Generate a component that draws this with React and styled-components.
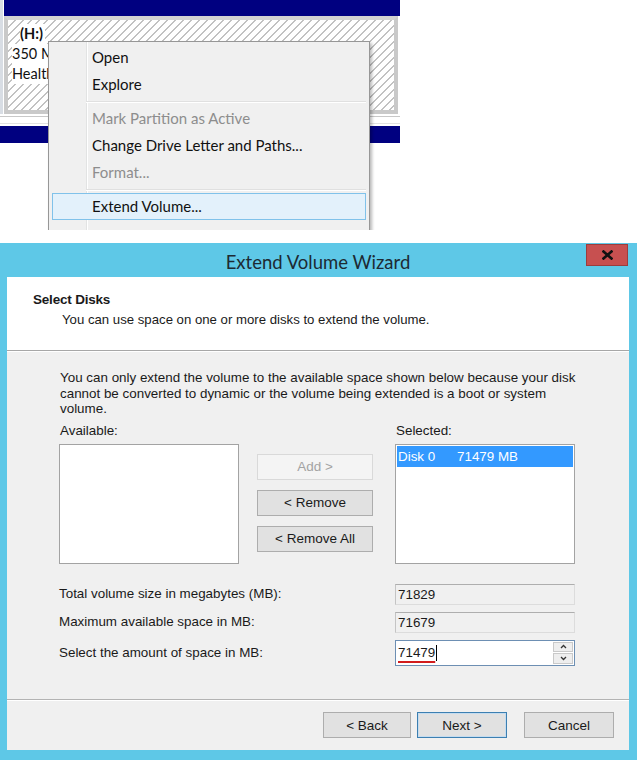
import React from 'react';
import styled, { createGlobalStyle } from 'styled-components';

const GlobalStyle = createGlobalStyle`
  html, body {
    margin: 0;
    padding: 0;
    background: #ffffff;
  }
  body {
    width: 637px;
    height: 760px;
    overflow: hidden;
    font-family: "Liberation Sans", Arial, sans-serif;
    color: #1a1a1a;
  }
`;

const Page = styled.div`
  width: 637px;
  display: flex;
  flex-direction: column;
`;

/* ---------- disk management strip + context menu ---------- */

const DiskArea = styled.div`
  position: relative;
  height: 230px;
  overflow: hidden;
`;

const DiskColumn = styled.div`
  width: 400px;
  display: flex;
  flex-direction: column;
  border-left: 3px solid #d8dde4;
  box-sizing: border-box;
`;

const NavyBar = styled.div`
  height: ${p => p.$h}px;
  margin-left: ${p => p.$inset || 0}px;
  background: #000080;
`;

const DiskFrame = styled.div`
  margin: 0 2px 0 1px;
  height: 86px;
  border: 4px solid #c9c9c9;
  border-top-color: #d2d2d2;
  display: flex;
  flex-direction: column;
  padding: 4px 0 0 4px;
  box-sizing: content-box;
  background: repeating-linear-gradient(
    135deg,
    #ffffff 0px,
    #ffffff 4.4px,
    #c2c2c2 4.4px,
    #c2c2c2 5.66px
  );
  font-family: Lato, "Noto Sans", sans-serif;
  font-size: 14.5px;
  line-height: 20px;
  color: #111;
`;

const DiskLabel = styled.span`
  align-self: flex-start;
  background: #ffffff;
  margin-left: ${p => p.$indent || 0}px;
  font-weight: ${p => (p.$bold ? 700 : 400)};
  padding-right: 2px;
`;

const DiskGap = styled.div`
  height: 12px;
  margin-left: -3px;
  background: linear-gradient(
    #ffffff 0 2px,
    #c8c8c8 2px 3px,
    #ffffff 3px 9px,
    #e2e2e2 9px 10px,
    #ffffff 10px
  );
`;

const ContextMenu = styled.div`
  position: absolute;
  left: 48px;
  top: 41px;
  width: 314px;
  padding: 2px 3px 30px;
  background: #f0f0f0
    linear-gradient(
      to right,
      transparent 37px,
      #e2e3e3 37px 38px,
      #ffffff 38px 39px,
      transparent 39px
    );
  border: 1px solid #979797;
  box-shadow: 2px 2px 3px rgba(0, 0, 0, 0.28);
  font-family: Lato, "Noto Sans", sans-serif;
  font-size: 15px;
`;

const MenuItem = styled.div`
  height: 25px;
  line-height: 25px;
  padding-left: 39px;
  border: 1px solid ${p => (p.$hot ? '#80c2ea' : 'transparent')};
  background: ${p => (p.$hot ? '#e3f1fb' : 'transparent')};
  color: ${p => (p.$disabled ? '#8d8d8d' : '#111111')};
`;

const MenuSeparator = styled.div`
  height: 7px;
  margin-left: 34px;
  background: linear-gradient(
    transparent 0 3px,
    #e0e0e0 3px 4px,
    #ffffff 4px 5px,
    transparent 5px
  );
`;

/* ---------- wizard window ---------- */

const Window = styled.div`
  margin-top: 13px;
  height: 517px;
  background: #5ec8e7;
  padding: 0 8px 10px 7px;
  display: flex;
  flex-direction: column;
  box-sizing: border-box;
`;

const TitleBar = styled.div`
  height: 34px;
  display: grid;
  grid-template-columns: 1fr auto 1fr;
  align-items: start;
`;

const Title = styled.div`
  grid-column: 2;
  padding-top: 4px;
  line-height: 30px;
  font-family: Lato, "Noto Sans", sans-serif;
  font-size: 18.5px;
  color: #1d2a33;
`;

const CloseButton = styled.div`
  grid-column: 3;
  justify-self: end;
  margin-top: 1px;
  margin-right: 1px;
  width: 40px;
  height: 20px;
  background: #c75050;
  border: 1px solid #9c3d3d;
  display: flex;
  align-items: center;
  justify-content: center;
`;

const Panel = styled.div`
  flex: 1;
  display: flex;
  flex-direction: column;
  background: #f0f0f0;
`;

const Header = styled.div`
  height: 74px;
  background: #ffffff;
  padding: 15px 0 0 26px;
  box-sizing: border-box;
  border-bottom: 1px solid #a7a7a7;
`;

const HeaderTitle = styled.div`
  font-weight: 700;
  font-size: 13.5px;
  line-height: 16px;
  letter-spacing: -0.2px;
`;

const HeaderText = styled.div`
  margin-top: 4px;
  padding-left: 29px;
  font-size: 13.2px;
  line-height: 16px;
`;

const Body = styled.div`
  flex: 1;
  padding: 18px 0 0 52px;
  border-top: 1px solid #ffffff;
  font-size: 13.4px;
`;

const Intro = styled.p`
  margin: 0 0 0 1px;
  width: 524px;
  line-height: 15.5px;
`;

const Pickers = styled.div`
  margin-top: 6px;
  display: grid;
  grid-template-columns: 198px 138px 180px;
  grid-template-rows: 15px 120px;
  row-gap: 6px;
`;

const PickerLabel = styled.div`
  grid-column: ${p => p.$col};
  grid-row: 1;
  line-height: 15px;
  padding-left: 1px;
`;

const ListBox = styled.div`
  grid-column: ${p => p.$col};
  grid-row: 2;
  width: 180px;
  background: #ffffff;
  border: 1px solid #a3a3a3;
  box-sizing: border-box;
  padding: 1px;
`;

const ListRow = styled.div`
  height: 21px;
  display: flex;
  align-items: center;
  padding-left: 1px;
  background: #3399ff;
  color: #ffffff;
`;

const ListCell = styled.span`
  width: ${p => p.$w}px;
`;

const ButtonStack = styled.div`
  grid-column: 2;
  grid-row: 2;
  padding-top: 10px;
  display: flex;
  flex-direction: column;
  gap: 10px;
`;

const Button = styled.div`
  width: ${p => p.$w}px;
  height: 26px;
  box-sizing: border-box;
  display: flex;
  align-items: center;
  justify-content: center;
  font-size: 13.5px;
  background: ${p => (p.$disabled ? '#f4f4f4' : '#e1e1e1')};
  border: 1px solid
    ${p => (p.$disabled ? '#d9d9d9' : p.$default ? '#3c7fb1' : '#adadad')};
  box-shadow: ${p => (p.$default ? 'inset 0 0 0 1px #c5dcef' : 'none')};
  color: ${p => (p.$disabled ? '#a3a3a3' : '#1a1a1a')};
`;

const Fields = styled.div`
  margin-top: 20px;
  display: grid;
  grid-template-columns: 336px 180px;
  row-gap: 7px;
  align-items: center;
`;

const FieldLabel = styled.div`
  line-height: 16px;
`;

const ReadOnlyField = styled.div`
  height: 21px;
  box-sizing: border-box;
  border: 1px solid;
  border-color: #aeaeae #dcdcdc #dcdcdc #c4c4c4;
  background: #f0f0f0;
  padding-left: 2px;
  line-height: 19px;
`;

const SpinField = styled.div`
  height: 26px;
  box-sizing: border-box;
  border: 1px solid #6d8fb3;
  background: #ffffff;
  display: flex;
  align-items: stretch;
`;

const SpinValue = styled.div`
  flex: 1;
  display: flex;
  align-items: center;
  padding-left: 2px;
`;

const Typed = styled.span`
  text-decoration: underline solid #d21c1c;
  text-decoration-thickness: 1.5px;
  text-underline-offset: 4px;
`;

const Caret = styled.span`
  display: inline-block;
  width: 1px;
  height: 16px;
  background: #000;
  margin-left: 1px;
  vertical-align: middle;
`;

const SpinButtons = styled.div`
  width: 20px;
  margin: 1px;
  display: flex;
  flex-direction: column;
  gap: 1px;
`;

const SpinButton = styled.div`
  flex: 1;
  background: #eeeeee;
  border: 1px solid #c9c9c9;
  display: flex;
  align-items: center;
  justify-content: center;
`;

const Footer = styled.div`
  height: 50px;
  border-top: 1px solid #b3b3b3;
  box-shadow: inset 0 1px 0 #ffffff;
  display: flex;
  align-items: center;
  justify-content: flex-end;
  padding: 0 15px 0 0;
`;

const FooterGap = styled.div`
  width: ${p => p.$w}px;
`;

const Chevron = ({ up }) => (
  <svg width="7" height="5" viewBox="0 0 7 5">
    <polyline
      points={up ? '1,4 3.5,1.5 6,4' : '1,1 3.5,3.5 6,1'}
      fill="none"
      stroke="#333"
      strokeWidth="1.3"
    />
  </svg>
);

const CloseGlyph = () => (
  <svg width="11" height="10" viewBox="0 0 11 10">
    <path d="M1.5 1.5 L9.5 8.5 M9.5 1.5 L1.5 8.5" stroke="#111" strokeWidth="2.6" strokeLinecap="square" />
  </svg>
);

const menuItems = [
  { label: 'Open' },
  { label: 'Explore' },
  { sep: true },
  { label: 'Mark Partition as Active', disabled: true },
  { label: 'Change Drive Letter and Paths...' },
  { label: 'Format...', disabled: true },
  { sep: true },
  { label: 'Extend Volume...', hot: true },
];

const fields = [
  { label: 'Total volume size in megabytes (MB):', value: '71829' },
  { label: 'Maximum available space in MB:', value: '71679' },
];

const App = () => (
  <Page>
    <GlobalStyle />
    <DiskArea>
      <DiskColumn>
        <NavyBar $h={16} $inset={1} />
        <DiskFrame>
          <DiskLabel $bold $indent={8}>(H:)</DiskLabel>
          <DiskLabel>350 MB</DiskLabel>
          <DiskLabel>Healthy</DiskLabel>
        </DiskFrame>
        <DiskGap />
        <NavyBar $h={17} $inset={-3} />
      </DiskColumn>

      <ContextMenu>
        {menuItems.map((item, i) =>
          item.sep ? (
            <MenuSeparator key={i} />
          ) : (
            <MenuItem key={i} $disabled={item.disabled} $hot={item.hot}>
              {item.label}
            </MenuItem>
          )
        )}
      </ContextMenu>
    </DiskArea>

    <Window>
      <TitleBar>
        <Title>Extend Volume Wizard</Title>
        <CloseButton>
          <CloseGlyph />
        </CloseButton>
      </TitleBar>

      <Panel>
        <Header>
          <HeaderTitle>Select Disks</HeaderTitle>
          <HeaderText>You can use space on one or more disks to extend the volume.</HeaderText>
        </Header>

        <Body>
          <Intro>
            You can only extend the volume to the available space shown below because your disk
            cannot be converted to dynamic or the volume being extended is a boot or system
            volume.
          </Intro>

          <Pickers>
            <PickerLabel $col={1}>Available:</PickerLabel>
            <PickerLabel $col={3}>Selected:</PickerLabel>
            <ListBox $col={1} />
            <ButtonStack>
              <Button $w={116} $disabled>Add &gt;</Button>
              <Button $w={116}>&lt; Remove</Button>
              <Button $w={116}>&lt; Remove All</Button>
            </ButtonStack>
            <ListBox $col={3}>
              <ListRow>
                <ListCell $w={59}>Disk 0</ListCell>
                <ListCell>71479 MB</ListCell>
              </ListRow>
            </ListBox>
          </Pickers>

          <Fields>
            {fields.map(f => (
              <React.Fragment key={f.label}>
                <FieldLabel>{f.label}</FieldLabel>
                <ReadOnlyField>{f.value}</ReadOnlyField>
              </React.Fragment>
            ))}
            <FieldLabel>Select the amount of space in MB:</FieldLabel>
            <SpinField>
              <SpinValue>
                <Typed>71479</Typed>
                <Caret />
              </SpinValue>
              <SpinButtons>
                <SpinButton><Chevron up /></SpinButton>
                <SpinButton><Chevron /></SpinButton>
              </SpinButtons>
            </SpinField>
          </Fields>
        </Body>

        <Footer>
          <Button $w={88}>&lt; Back</Button>
          <FooterGap $w={6} />
          <Button $w={90} $default>Next &gt;</Button>
          <FooterGap $w={17} />
          <Button $w={90}>Cancel</Button>
        </Footer>
      </Panel>
    </Window>
  </Page>
);

export default App;
